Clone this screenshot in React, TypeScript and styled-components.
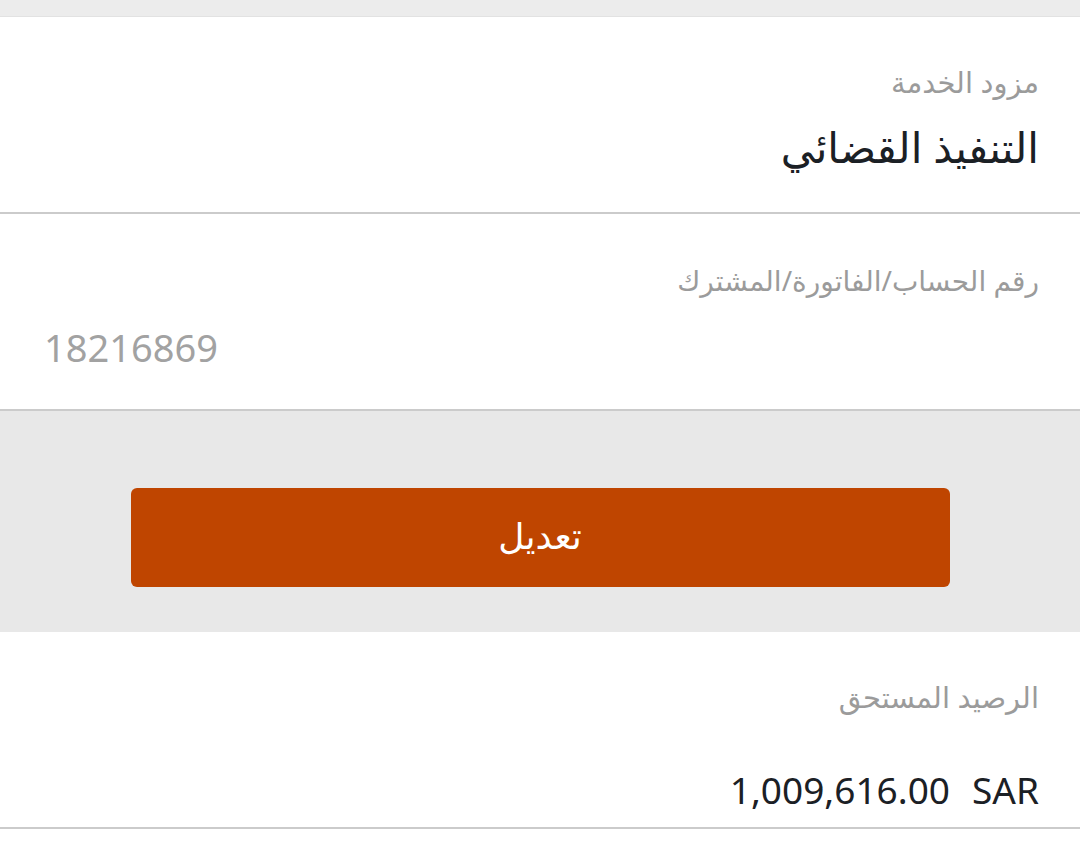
import React from "react";
import styled, { createGlobalStyle } from "styled-components";

const Global = createGlobalStyle`
  html, body { margin: 0; padding: 0; background: #ffffff; }
  body { font-family: "Noto Sans", "DejaVu Sans", sans-serif; }
  * { box-sizing: border-box; }
`;

const Page = styled.div`
  width: 1080px;
  min-height: 855px;
  display: flex;
  flex-direction: column;
  background: #ffffff;
`;

const TopStrip = styled.div`
  height: 17px;
  background: #ececec;
  border-bottom: 1px solid #e2e2e2;
`;

const Field = styled.section`
  direction: rtl;
  height: 197px;
  background: #ffffff;
  border-bottom: 2px solid #cbcbcb;
  padding: 0 41px 0 44px;
  display: flex;
  flex-direction: column;
`;

const Label = styled.div<{ $top: number; $size?: number }>`
  margin-top: ${(p) => p.$top}px;
  font-size: ${(p) => p.$size ?? 29}px;
  line-height: 40px;
  color: #9b9b9b;
  font-weight: 400;
`;

const Value = styled.div<{ $top: number; $ltr?: boolean; $muted?: boolean }>`
  margin-top: ${(p) => p.$top}px;
  font-size: ${(p) => (p.$ltr ? 38 : 42)}px;
  line-height: 50px;
  color: ${(p) => (p.$muted ? "#a2a2a2" : "#1b2025")};
  text-align: ${(p) => (p.$ltr ? "left" : "right")};
  direction: ${(p) => (p.$ltr ? "ltr" : "rtl")};
`;

const Amount = styled.div`
  margin-top: 48px;
  direction: ltr;
  font-size: 37px;
  line-height: 50px;
  color: #1b2025;
  display: flex;
  justify-content: flex-end;
  gap: 22px;
`;

const ActionArea = styled.div`
  height: 221px;
  background: #e8e8e8;
  display: flex;
  align-items: flex-start;
  justify-content: center;
  padding-top: 77px;
`;

const Button = styled.button`
  width: 819px;
  height: 99px;
  border: none;
  border-radius: 6px;
  background: #bf4500;
  color: #ffffff;
  font-family: "Noto Sans", "DejaVu Sans", sans-serif;
  font-size: 36px;
  direction: rtl;
  cursor: pointer;
  padding: 0 0 4px;
`;

export default function App() {
  return (
    <>
      <Global />
      <Page>
        <TopStrip />
        <Field>
          <Label $top={45}>مزود الخدمة</Label>
          <Value $top={20}>التنفيذ القضائي</Value>
        </Field>
        <Field>
          <Label $top={46} $size={28}>رقم الحساب/الفاتورة/المشترك</Label>
          <Value $top={22} $ltr $muted>18216869</Value>
        </Field>
        <ActionArea>
          <Button>تعديل</Button>
        </ActionArea>
        <Field>
          <Label $top={45}>الرصيد المستحق</Label>
          <Amount>
            <span>1,009,616.00</span>
            <span>SAR</span>
          </Amount>
        </Field>
      </Page>
    </>
  );
}
